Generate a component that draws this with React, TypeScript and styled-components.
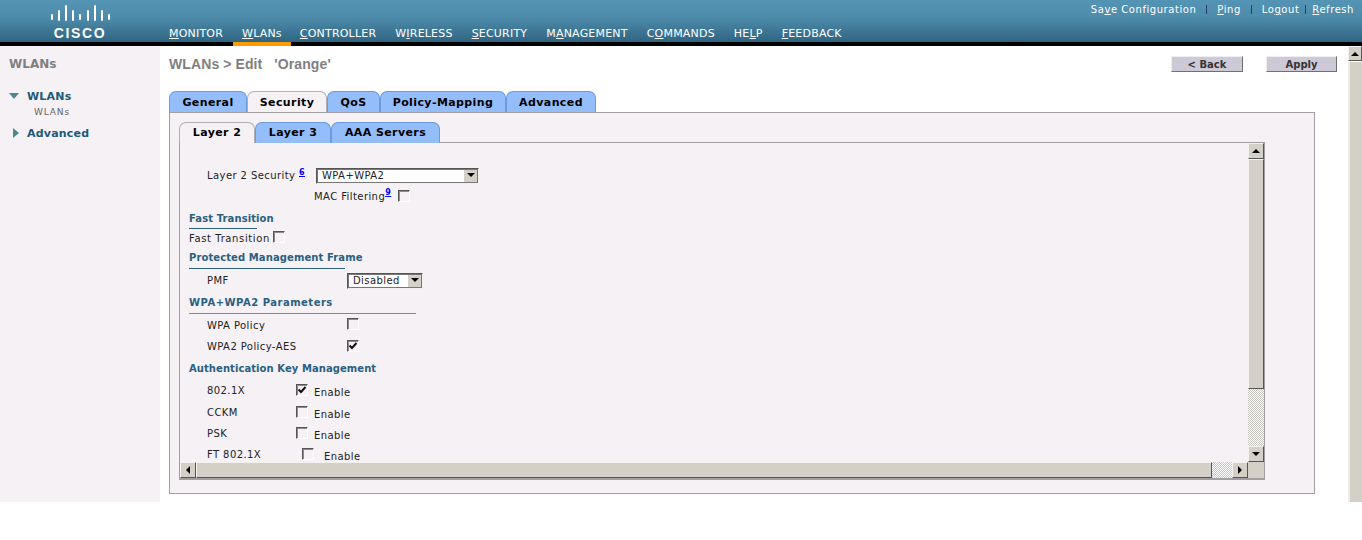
import React from 'react';
import styled, { createGlobalStyle } from 'styled-components';

const GlobalStyle = createGlobalStyle`
  html, body {
    margin: 0;
    padding: 0;
    background: #fff;
    overflow: hidden;
  }
  body {
    font-family: "DejaVu Sans", Verdana, sans-serif;
    font-size: 10px;
    color: #222;
  }
  * { box-sizing: border-box; }
`;

const Header = styled.header`
  height: 46px;
  display: flex;
  position: relative;
  border-bottom: 4px solid #000;
  background: linear-gradient(to bottom, #5494b4 0%, #4f8cac 40%, #2f6582 100%);
`;

const Logo = styled.div`
  width: 160px;
  margin-right: 9px;
  display: flex;
  flex-direction: column;
  align-items: center;
  padding: 4px 0 0 0;
  svg { display: block; }
`;

const LogoText = styled.span`
  font: bold 14px/15px "Liberation Sans", Arial, sans-serif;
  letter-spacing: 1.6px;
  color: #fff;
  margin-top: 4px;
`;

const Nav = styled.nav`
  display: flex;
  align-items: flex-end;
  flex: 1;
`;

const NavItem = styled.a<{ $active?: boolean }>`
  height: ${(p) => (p.$active ? '19px' : '15px')};
  padding: 0 ${(p) => (p.$active ? '9px' : '0')};
  margin-right: ${(p) => (p.$active ? '9px' : '19px')};
  margin-left: ${(p) => (p.$active ? '-9px' : '0')};
  font-size: 11px;
  line-height: 14px;
  letter-spacing: 0.2px;
  color: #fff;
  border-bottom: ${(p) => (p.$active ? '4px solid #f90' : 'none')};
  position: relative;
  top: ${(p) => (p.$active ? '4px' : '0')};
  u { text-decoration: underline; }
`;

const TopLinks = styled.div`
  position: absolute;
  top: 3px;
  right: 8px;
  display: flex;
  align-items: center;
  font-size: 10px;
  line-height: 13px;
  letter-spacing: 0.55px;
  color: #fff;
`;

const Sep = styled.span<{ $gap: number }>`
  width: 1px;
  height: 9px;
  background: #2c3a70;
  margin: 0 ${(p) => p.$gap}px;
`;

const Body = styled.div`
  display: flex;
  height: 456px;
`;

const Sidebar = styled.aside`
  width: 160px;
  flex-shrink: 0;
  background: #f5f1f5;
  padding: 10px 0 0 9px;
`;

const SideTitle = styled.div`
  font-size: 12px;
  font-weight: bold;
  line-height: 17px;
  color: #7f7f7f;
  margin-bottom: 16px;
`;

const SideGroup = styled.div`
  display: flex;
  align-items: center;
  gap: 8px;
  height: 14px;
  font-size: 11px;
  font-weight: bold;
  letter-spacing: 0.2px;
  color: #1d5a7a;
`;

const SideChild = styled.div`
  font-size: 9px;
  line-height: 12px;
  letter-spacing: 0.85px;
  color: #666;
  padding: 3px 0 0 25px;
  margin-bottom: 8px;
`;

const TriDown = styled.span`
  width: 0;
  height: 0;
  border-left: 5px solid transparent;
  border-right: 5px solid transparent;
  border-top: 6px solid #4d8a8f;
`;

const TriRight = styled.span`
  width: 0;
  height: 0;
  margin-left: 4px;
  border-top: 5px solid transparent;
  border-bottom: 5px solid transparent;
  border-left: 6px solid #4d8a8f;
`;

const Main = styled.main`
  flex: 1;
  min-width: 0;
  padding: 10px 11px 0 9px;
  display: flex;
  flex-direction: column;
`;

const TitleRow = styled.div`
  display: flex;
  align-items: flex-start;
  height: 35px;
`;

const Title = styled.h1`
  flex: 1;
  margin: 0;
  font: bold 14px/17px "Liberation Sans", Arial, sans-serif;
  letter-spacing: 0.1px;
  color: #7f7f7f;
  white-space: pre;
`;

const ActionButton = styled.button<{ $w: number }>`
  width: ${(p) => p.$w}px;
  height: 16px;
  margin-left: 23px;
  padding: 0;
  background: #cdc9d6;
  border: 1px solid;
  border-color: #f0eef2 #6f6f6f #6f6f6f #f0eef2;
  font: bold 10px/13px "DejaVu Sans", Verdana, sans-serif;
  color: #333;
`;

const TabBar = styled.div`
  display: flex;
  height: 21px;
`;

const Tab = styled.div<{ $active?: boolean; $w: number }>`
  width: ${(p) => p.$w}px;
  flex-shrink: 0;
  display: flex;
  align-items: center;
  justify-content: center;
  font-size: 11px;
  font-weight: bold;
  letter-spacing: 0.4px;
  color: #000;
  border: 1px solid ${(p) => (p.$active ? '#b3aeb3' : '#6d9ad8')};
  border-bottom: none;
  border-radius: 7px 7px 0 0;
  background: ${(p) => (p.$active ? '#f5f1f5' : '#94bdfb')};
`;

const InnerTab = styled(Tab)`
  padding-bottom: 2px;
`;

const OuterPanel = styled.section`
  width: 1146px;
  height: 382px;
  padding: 9px 49px 0 9px;
  background: #f5f1f5;
  border: 1px solid #a39ea3;
`;

const Frame = styled.div`
  width: 1086px;
  height: 338px;
  margin-top: -1px;
  display: grid;
  grid-template-columns: 1fr 16px;
  grid-template-rows: 1fr 16px;
  border: 1px solid #a39ea3;
  border-bottom: 2px solid #a39ea3;
`;

const FormPane = styled.div`
  overflow: hidden;
  padding: 22px 0 0 9px;
`;

const Row = styled.div<{ $h?: number; $indent?: number; $ls?: number }>`
  display: flex;
  align-items: center;
  height: ${(p) => p.$h ?? 21}px;
  padding-left: ${(p) => p.$indent ?? 18}px;
  font-size: 10px;
  letter-spacing: ${(p) => p.$ls ?? 0.42}px;
  color: #222;
  white-space: nowrap;
`;

const Label = styled.span<{ $w?: number }>`
  display: inline-block;
  width: ${(p) => (p.$w ? `${p.$w}px` : 'auto')};
  flex-shrink: 0;
`;

const Sup = styled.a`
  color: #00f;
  font-size: 8px;
  font-weight: bold;
  text-decoration: underline;
  position: relative;
  top: -4px;
`;

const Heading = styled.div<{ $line?: number; $ls?: number; $rule?: string; $pt?: number }>`
  width: ${(p) => (p.$line ? `${p.$line}px` : 'auto')};
  height: 22px;
  font-size: 10px;
  font-weight: bold;
  letter-spacing: ${(p) => p.$ls ?? 0.42}px;
  line-height: 15px;
  color: #2a6080;
  padding-top: ${(p) => p.$pt ?? 3}px;
  white-space: nowrap;
  border-bottom: ${(p) => (p.$line ? `1px solid ${p.$rule ?? '#2a6080'}` : 'none')};
`;

const Select = styled.div<{ $w: number }>`
  width: ${(p) => p.$w}px;
  height: 16px;
  display: flex;
  align-items: center;
  justify-content: space-between;
  background: #fff;
  border: 1px solid;
  border-color: #555 #f0f0f0 #f0f0f0 #555;
  outline: 1px solid #777;
  outline-offset: -2px;
  padding-left: 5px;
`;

const SelectArrow = styled.span`
  width: 15px;
  height: 14px;
  background: #d4d0c8;
  border-left: 1px solid #fff;
  border-bottom: 1px solid #555;
  display: flex;
  align-items: center;
  justify-content: center;
`;

const Check = styled.span<{ $ml?: number }>`
  width: 12px;
  height: 12px;
  flex-shrink: 0;
  margin-left: ${(p) => p.$ml ?? 0}px;
  margin-top: -2px;
  background: #f5f1f5;
  border: 1px solid;
  border-color: #555 #fff #fff #555;
  box-shadow: inset 1px 1px 0 #8c8c8c;
  display: flex;
  align-items: center;
  justify-content: center;
`;

const EnableText = styled.span<{ $ml?: number }>`
  margin-left: ${(p) => p.$ml ?? 6}px;
  position: relative;
  top: 2px;
`;

const VBar = styled.div`
  display: flex;
  flex-direction: column;
  background-color: #fff;
  background-image: conic-gradient(#c9c6c0 25%, #fff 0 50%, #c9c6c0 0 75%, #fff 0);
  background-size: 2px 2px;
`;

const HBar = styled(VBar)`
  flex-direction: row;
`;

const ScrollBtn = styled.div`
  width: 16px;
  height: 16px;
  flex-shrink: 0;
  display: flex;
  align-items: center;
  justify-content: center;
  background: #d4d0c8;
  border: 1px solid;
  border-color: #f4f2ee #555 #555 #f4f2ee;
`;

const Thumb = styled.div<{ $len: number; $horizontal?: boolean }>`
  ${(p) => (p.$horizontal ? `width: ${p.$len}px;` : `height: ${p.$len}px;`)}
  flex-shrink: 0;
  background: #d4d0c8;
  border: 1px solid;
  border-color: #f4f2ee #555 #555 #f4f2ee;
`;

const Spacer = styled.div`
  flex: 1;
`;

const Corner = styled.div`
  background: #d4d0c8;
`;

const PageScroll = styled.div`
  width: 14px;
  flex-shrink: 0;
  display: flex;
  flex-direction: column;
  background: #fff;
`;

const PageBtn = styled(ScrollBtn)`
  width: 14px;
  height: 15px;
`;

const PageThumb = styled.div`
  flex: 1;
  background: #d4d0c8;
  border-left: 2px solid #eeece8;
  margin-top: 1px;
`;

const Arrow = ({ dir }: { dir: 'up' | 'down' | 'left' | 'right' }) => {
  const pts = {
    up: '0,5 8,5 4,1',
    down: '0,1 8,1 4,5',
    left: '5,0 5,8 1,4',
    right: '1,0 1,8 5,4',
  }[dir];
  const w = dir === 'up' || dir === 'down' ? 8 : 6;
  const h = dir === 'up' || dir === 'down' ? 6 : 8;
  return (
    <svg width={w} height={h} viewBox={`0 0 ${w} ${h}`}>
      <polygon points={pts} fill="#000" />
    </svg>
  );
};

const Tick = () => (
  <svg width="10" height="10" viewBox="0 0 10 10">
    <path d="M1.5 4.5 L4 7 L8.5 2" fill="none" stroke="#111" strokeWidth="2" />
  </svg>
);

const CiscoBars = () => {
  const bars = [
    [51, 14, 20],
    [58, 10, 21],
    [65, 5, 21],
    [72, 10, 21],
    [79, 14, 20],
    [87, 10, 21],
    [94, 5, 21],
    [101, 10, 21],
    [108, 14, 20],
  ];
  return (
    <svg width="62" height="18" viewBox="49 4 62 18">
      {bars.map(([x, a, b]) => (
        <rect key={x} x={x} y={a} width="2" height={b - a} rx="1" fill="#fff" />
      ))}
    </svg>
  );
};

const navItems: [string, string, string][] = [
  ['', 'M', 'ONITOR'],
  ['', 'W', 'LANs'],
  ['', 'C', 'ONTROLLER'],
  ['W', 'I', 'RELESS'],
  ['', 'S', 'ECURITY'],
  ['M', 'A', 'NAGEMENT'],
  ['C', 'O', 'MMANDS'],
  ['HE', 'L', 'P'],
  ['', 'F', 'EEDBACK'],
];

export default function App() {
  return (
    <>
      <GlobalStyle />
      <Header>
        <Logo>
          <CiscoBars />
          <LogoText>CISCO</LogoText>
        </Logo>
        <Nav>
          {navItems.map(([a, b, c], i) => (
            <NavItem key={i} $active={i === 1}>
              {a}
              <u>{b}</u>
              {c}
            </NavItem>
          ))}
        </Nav>
        <TopLinks>
          <span>Sa<u>v</u>e Configuration</span>
          <Sep $gap={10} />
          <span><u>P</u>ing</span>
          <Sep $gap={10} />
          <span>Lo<u>g</u>out</span>
          <Sep $gap={6} />
          <span><u>R</u>efresh</span>
        </TopLinks>
      </Header>
      <Body>
        <Sidebar>
          <SideTitle>WLANs</SideTitle>
          <SideGroup>
            <TriDown />
            WLANs
          </SideGroup>
          <SideChild>WLANs</SideChild>
          <SideGroup>
            <TriRight />
            Advanced
          </SideGroup>
        </Sidebar>
        <Main>
          <TitleRow>
            <Title>{"WLANs > Edit   'Orange'"}</Title>
            <ActionButton $w={72}>&lt; Back</ActionButton>
            <ActionButton $w={71}>Apply</ActionButton>
          </TitleRow>
          <TabBar>
            <Tab $w={78}>General</Tab>
            <Tab $w={80} $active>Security</Tab>
            <Tab $w={53}>QoS</Tab>
            <Tab $w={126}>Policy-Mapping</Tab>
            <Tab $w={90}>Advanced</Tab>
          </TabBar>
          <OuterPanel>
            <TabBar>
              <InnerTab $w={76} $active>Layer 2</InnerTab>
              <InnerTab $w={76}>Layer 3</InnerTab>
              <InnerTab $w={109}>AAA Servers</InnerTab>
            </TabBar>
            <Frame>
              <FormPane>
                <Row>
                  <Label $w={109}>Layer 2 Security <Sup>6</Sup></Label>
                  <Select $w={163}>
                    WPA+WPA2
                    <SelectArrow><Arrow dir="down" /></SelectArrow>
                  </Select>
                </Row>
                <Row $indent={125}>
                  MAC Filtering<Sup>9</Sup>
                  <Check $ml={7} />
                </Row>
                <Heading $line={68} $ls={0.1} $pt={4}>Fast Transition</Heading>
                <Row $indent={0} $h={18} $ls={0.62}>
                  Fast Transition
                  <Check $ml={3} />
                </Row>
                <Heading $line={156} $ls={0.1}>Protected Management Frame</Heading>
                <Row $h={23}>
                  <Label $w={140}>PMF</Label>
                  <Select $w={76}>
                    Disabled
                    <SelectArrow><Arrow dir="down" /></SelectArrow>
                  </Select>
                </Row>
                <Heading $line={227} $ls={0.5} $rule="#8a868a">WPA+WPA2 Parameters</Heading>
                <Row $h={22}>
                  <Label $w={140}>WPA Policy</Label>
                  <Check />
                </Row>
                <Row>
                  <Label $w={140}>WPA2 Policy-AES</Label>
                  <Check><Tick /></Check>
                </Row>
                <Heading $ls={0.07} $pt={4}>Authentication Key Management</Heading>
                <Row $h={23}>
                  <Label $w={89}>802.1X</Label>
                  <Check><Tick /></Check>
                  <EnableText>Enable</EnableText>
                </Row>
                <Row>
                  <Label $w={89}>CCKM</Label>
                  <Check />
                  <EnableText>Enable</EnableText>
                </Row>
                <Row>
                  <Label $w={89}>PSK</Label>
                  <Check />
                  <EnableText>Enable</EnableText>
                </Row>
                <Row>
                  <Label $w={95}>FT 802.1X</Label>
                  <Check />
                  <EnableText $ml={10}>Enable</EnableText>
                </Row>
              </FormPane>
              <VBar>
                <ScrollBtn><Arrow dir="up" /></ScrollBtn>
                <Thumb $len={230} />
                <Spacer />
                <ScrollBtn><Arrow dir="down" /></ScrollBtn>
              </VBar>
              <HBar>
                <ScrollBtn><Arrow dir="left" /></ScrollBtn>
                <Thumb $horizontal $len={1016} />
                <Spacer />
                <ScrollBtn><Arrow dir="right" /></ScrollBtn>
              </HBar>
              <Corner />
            </Frame>
          </OuterPanel>
        </Main>
        <PageScroll>
          <PageBtn><Arrow dir="up" /></PageBtn>
          <PageThumb />
        </PageScroll>
      </Body>
    </>
  );
}
